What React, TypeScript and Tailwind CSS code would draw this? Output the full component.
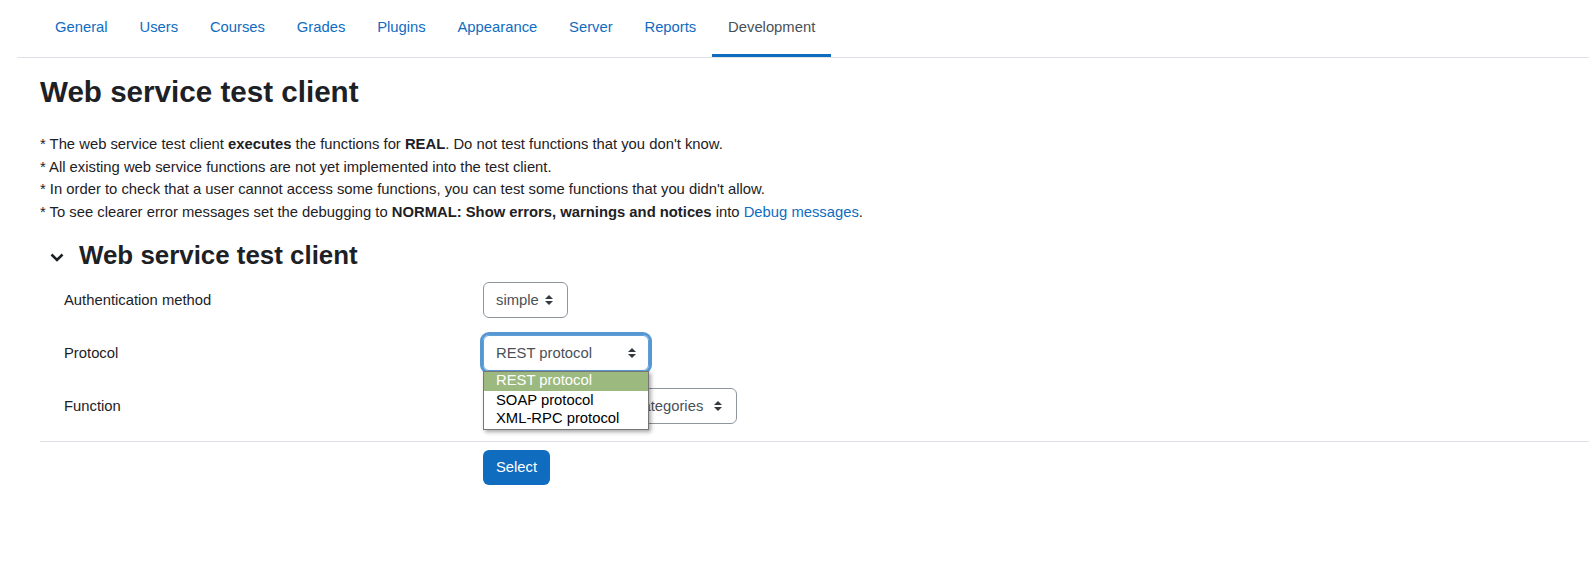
import React from "react";

const font = { fontFamily: '"Liberation Sans", Arial, sans-serif' };

function Arrows({ className = "" }: { className?: string }) {
  return (
    <svg width="8" height="10" viewBox="0 0 8 10" className={className}>
      <path d="M4 0 L8 4 H0 Z" fill="#343a40" />
      <path d="M0 6 H8 L4 10 Z" fill="#343a40" />
    </svg>
  );
}

const tabs = ["General", "Users", "Courses", "Grades", "Plugins", "Appearance", "Server", "Reports", "Development"];

export default function App() {
  return (
    <div className="min-h-[573px] bg-white text-[#1d2125] text-[14.8px] leading-[22.5px]" style={font}>
      <div className="pl-[17px]">
        <ul className="flex border-b border-[#dee2e6] pl-[22px] h-[58px]">
          {tabs.map((t) => {
            const active = t === "Development";
            return (
              <li key={t} className="flex">
                <a
                  className={
                    "block pl-4 pr-[15.8px] pt-[16px] h-[57px] " +
                    (active ? "text-[#495057] border-b-[3px] border-[#0f6cbf]" : "text-[#0f6cbf]")
                  }
                >
                  {t}
                </a>
              </li>
            );
          })}
        </ul>
      </div>

      <div className="pl-10">
        <h2 className="text-[29.6px] leading-[36px] font-bold mt-[16px] mb-0">Web service test client</h2>
        <div className="mt-[23px]">
          <div>
            * The web service test client <b>executes</b> the functions for <b>REAL</b>. Do not test functions that you don't know.
          </div>
          <div>* All existing web service functions are not yet implemented into the test client.</div>
          <div>* In order to check that a user cannot access some functions, you can test some functions that you didn't allow.</div>
          <div>
            * To see clearer error messages set the debugging to <b>NORMAL: Show errors, warnings and notices</b> into{" "}
            <a className="text-[#0f6cbf]">Debug messages</a>.
          </div>
        </div>

        <div className="flex items-center mt-[16px] h-[32px]">
          <svg width="16" height="16" viewBox="0 0 16 16" className="ml-[9px] mr-[14px] mt-[3px]">
            <path d="M2.5 5.5 L8 11 L13.5 5.5" fill="none" stroke="#1d2125" strokeWidth="2.6" />
          </svg>
          <h3 className="text-[25.9px] leading-[32px] font-bold">Web service test client</h3>
        </div>

        <div className="mt-[11px]">
          <div className="flex h-[36px] mb-[17px]">
            <div className="w-[443px] shrink-0 pl-6 flex items-center">Authentication method</div>
            <div className="flex items-center justify-between w-[85px] h-[36px] border border-[#8f959e] rounded-[6px] pl-3 pr-[14px] text-[#495057]">
              <span>simple</span>
              <Arrows />
            </div>
          </div>

          <div className="flex h-[36px] mb-[17px]">
            <div className="w-[443px] shrink-0 pl-6 flex items-center">Protocol</div>
            <div className="relative">
              <div className="flex items-center justify-between w-[166px] h-[36px] border border-[#5e9ed9] rounded-[6px] pl-3 pr-[12px] text-[#495057] shadow-[0_0_0_3px_rgba(15,108,191,0.7)]">
                <span>REST protocol</span>
                <Arrows />
              </div>
              <div className="absolute left-0 top-[36px] z-10 w-[166px] bg-white border border-[#767676] shadow-[2px_2px_4px_rgba(0,0,0,0.35)] text-black leading-[18px] pb-px">
                <div className="bg-[#9cba7f] text-white pl-3 h-[18.5px] leading-[17px]">REST protocol</div>
                <div className="pl-3 h-[18.5px]">SOAP protocol</div>
                <div className="pl-3 h-[18.5px]">XML-RPC protocol</div>
              </div>
            </div>
          </div>

          <div className="flex h-[36px] mb-[17px]">
            <div className="w-[443px] shrink-0 pl-6 flex items-center">Function</div>
            <div className="flex items-center justify-between w-[254px] h-[36px] border border-[#8f959e] rounded-[6px] pl-3 pr-[14px] text-[#495057]">
              <span>core_course_create_categories</span>
              <Arrows />
            </div>
          </div>
        </div>

        <div className="border-t border-[#dee2e6]" />
        <div className="pl-[443px] pt-2">
          <button className="h-[35px] w-[67px] rounded-[6px] bg-[#0f6cbf] text-white text-[14.8px]" style={font}>
            Select
          </button>
        </div>
      </div>
    </div>
  );
}
